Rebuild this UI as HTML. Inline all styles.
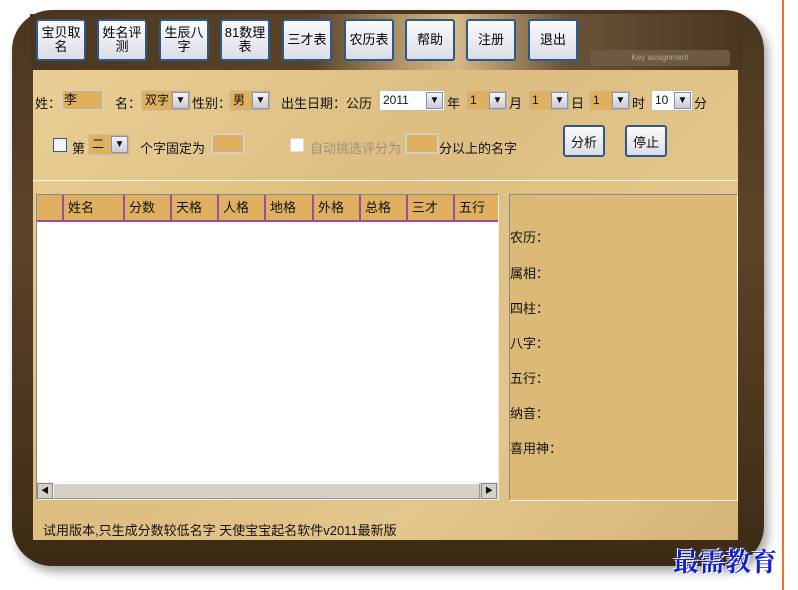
<!DOCTYPE html>
<html><head><meta charset="utf-8"><style>
*{margin:0;padding:0;box-sizing:border-box}
body{width:798px;height:590px;background:#fff;position:relative;overflow:hidden;font-family:"Liberation Sans","Noto Sans CJK SC",sans-serif;font-size:12px;color:#111}
.a{position:absolute}
.frame{left:12px;top:10px;width:752px;height:556px;border-radius:40px;background:linear-gradient(#4a3620,#5c4428 40%,#3d2a16);box-shadow:4px 6px 10px rgba(0,0,0,.35)}
.topbar{left:30px;top:14px;width:712px;height:56px;background:linear-gradient(90deg,#4a3620,#5a4428 40%,#b09468 52%,#d4b888 60%,#6a5438 75%,#4a3620)}
.panel{left:33px;top:70px;width:705px;height:470px;background:linear-gradient(135deg,#e9cf95,#ddbd80 40%,#e3c68c 70%,#d6b478)}
.btn{position:absolute;top:19px;width:50px;height:42px;border:2px solid #2a5a8a;border-radius:3px;background:linear-gradient(#fbfbfd,#dcdce6);font-size:13px;line-height:14px;text-align:center;display:flex;align-items:center;justify-content:center;color:#000}
.in{position:absolute;height:22px;background:#deb060;border:2px solid #d6d0c4}
.sel{position:absolute;height:21px;border:1px solid #c8c0b0;background:#deb060;font-size:12px;padding-left:3px;line-height:19px}
.sel i{position:absolute;right:1px;top:1px;width:17px;height:17px;background:linear-gradient(#f4f4f8,#c8cad8);border:1px solid #8890a8;font-style:normal;font-size:10px;text-align:center;line-height:15px}
.t{position:absolute;font-size:13px;white-space:nowrap}
.b2{position:absolute;top:125px;width:42px;height:32px;border:2px solid #2a5a8a;border-radius:3px;background:linear-gradient(#fbfbfd,#dcdce6);font-size:13px;display:flex;align-items:center;justify-content:center}
.th{position:absolute;top:0;height:27px;border-left:2px solid #a04aa0;font-size:13px;line-height:26px;padding-left:4px}
</style></head><body>
<div class="a frame"></div>
<div class="a topbar"></div>
<div class="a" style="left:590px;top:50px;width:140px;height:16px;background:#6d5a40;border-radius:3px;color:#b9a888;font-size:8px;text-align:center;line-height:16px">Key assignment</div>
<div class="a panel"></div>

<div class="btn" style="left:36px">宝贝取<br>名</div>
<div class="btn" style="left:97px">姓名评<br>测</div>
<div class="btn" style="left:159px">生辰八<br>字</div>
<div class="btn" style="left:220px">81数理<br>表</div>
<div class="btn" style="left:282px">三才表</div>
<div class="btn" style="left:344px">农历表</div>
<div class="btn" style="left:405px">帮助</div>
<div class="btn" style="left:466px">注册</div>
<div class="btn" style="left:528px">退出</div>

<div class="t" style="left:35px;top:93px">姓：</div>
<div class="in" style="left:61px;top:89px;width:43px;font-size:13px;padding-left:1px;line-height:18px">李</div>
<div class="t" style="left:115px;top:93px">名：</div>
<div class="sel" style="left:141px;top:90px;width:50px">双字<i>▼</i></div>
<div class="t" style="left:192px;top:93px">性别：</div>
<div class="sel" style="left:229px;top:90px;width:42px">男<i>▼</i></div>
<div class="t" style="left:281px;top:93px">出生日期：公历</div>
<div class="sel" style="left:379px;top:90px;width:66px;background:#fff">2011<i>▼</i></div>
<div class="t" style="left:447px;top:93px">年</div>
<div class="sel" style="left:466px;top:90px;width:42px">1<i>▼</i></div>
<div class="t" style="left:509px;top:93px">月</div>
<div class="sel" style="left:528px;top:90px;width:42px">1<i>▼</i></div>
<div class="t" style="left:571px;top:93px">日</div>
<div class="sel" style="left:589px;top:90px;width:42px">1<i>▼</i></div>
<div class="t" style="left:632px;top:93px">时</div>
<div class="sel" style="left:651px;top:90px;width:42px;background:#fff">10<i>▼</i></div>
<div class="t" style="left:694px;top:93px">分</div>

<div class="a" style="left:53px;top:138px;width:14px;height:14px;border:1px solid #3a5a8a;background:#f4f4f4"></div>
<div class="t" style="left:72px;top:138px">第</div>
<div class="sel" style="left:88px;top:134px;width:42px">二<i>▼</i></div>
<div class="t" style="left:140px;top:138px">个字固定为</div>
<div class="in" style="left:211px;top:133px;width:34px;height:21px"></div>
<div class="a" style="left:290px;top:138px;width:14px;height:14px;background:#fff;border:1px solid #ddd"></div>
<div class="t" style="left:310px;top:138px;color:#9a9080">自动挑选评分为</div>
<div class="in" style="left:405px;top:133px;width:34px;height:21px"></div>
<div class="t" style="left:439px;top:138px">分以上的名字</div>
<div class="b2" style="left:563px">分析</div>
<div class="b2" style="left:625px">停止</div>

<div class="a" style="left:33px;top:180px;width:705px;height:1px;background:#fff8e8"></div>

<div class="a" style="left:36px;top:194px;width:463px;height:306px;background:#fff;border:1px solid #888;border-right-color:#eee;border-bottom-color:#eee"></div>
<div class="a" style="left:37px;top:195px;width:461px;height:27px;background:#deb060;border-bottom:2px solid #a04aa0">
<div class="th" style="left:25px">姓名</div>
<div class="th" style="left:86px">分数</div>
<div class="th" style="left:133px">天格</div>
<div class="th" style="left:180px">人格</div>
<div class="th" style="left:227px">地格</div>
<div class="th" style="left:275px">外格</div>
<div class="th" style="left:322px">总格</div>
<div class="th" style="left:369px">三才</div>
<div class="th" style="left:416px">五行</div>
</div>
<div class="a" style="left:37px;top:482px;width:461px;height:17px;background:#d4d0c8;border-top:1px solid #eee"></div>
<div class="a" style="left:37px;top:483px;width:16px;height:16px;background:#d4d0c8;border:1px solid #888;font-size:8px;text-align:center;line-height:14px">◀</div>
<div class="a" style="left:53px;top:483px;width:427px;height:16px;background:#d4d0c8;border:1px solid #999;border-top-color:#fff;border-left-color:#fff"></div>
<div class="a" style="left:481px;top:483px;width:16px;height:16px;background:#d4d0c8;border:1px solid #888;font-size:8px;text-align:center;line-height:14px">▶</div>

<div class="a" style="left:509px;top:194px;width:229px;height:307px;border:1px solid #8a8a8a;border-right-color:#fff8e8;border-bottom-color:#fff8e8;background:#ddb978"></div>
<div class="t" style="left:510px;top:227px">农历：</div>
<div class="t" style="left:510px;top:263px">属相：</div>
<div class="t" style="left:510px;top:298px">四柱：</div>
<div class="t" style="left:510px;top:333px">八字：</div>
<div class="t" style="left:510px;top:368px">五行：</div>
<div class="t" style="left:510px;top:403px">纳音：</div>
<div class="t" style="left:510px;top:438px">喜用神：</div>

<div class="t" style="left:43px;top:520px">试用版本,只生成分数较低名字 天使宝宝起名软件v2011最新版</div>

<div class="a" style="left:782px;top:0;width:2px;height:590px;background:#f07030"></div>
<div class="t" style="left:673px;top:542px;font-size:26px;font-weight:bold;color:#1020d0;font-family:'Liberation Serif','Noto Serif CJK SC',serif;text-shadow:1px 1px 0 #fff,-1px -1px 0 #fff">最需教育</div>
</body></html>
